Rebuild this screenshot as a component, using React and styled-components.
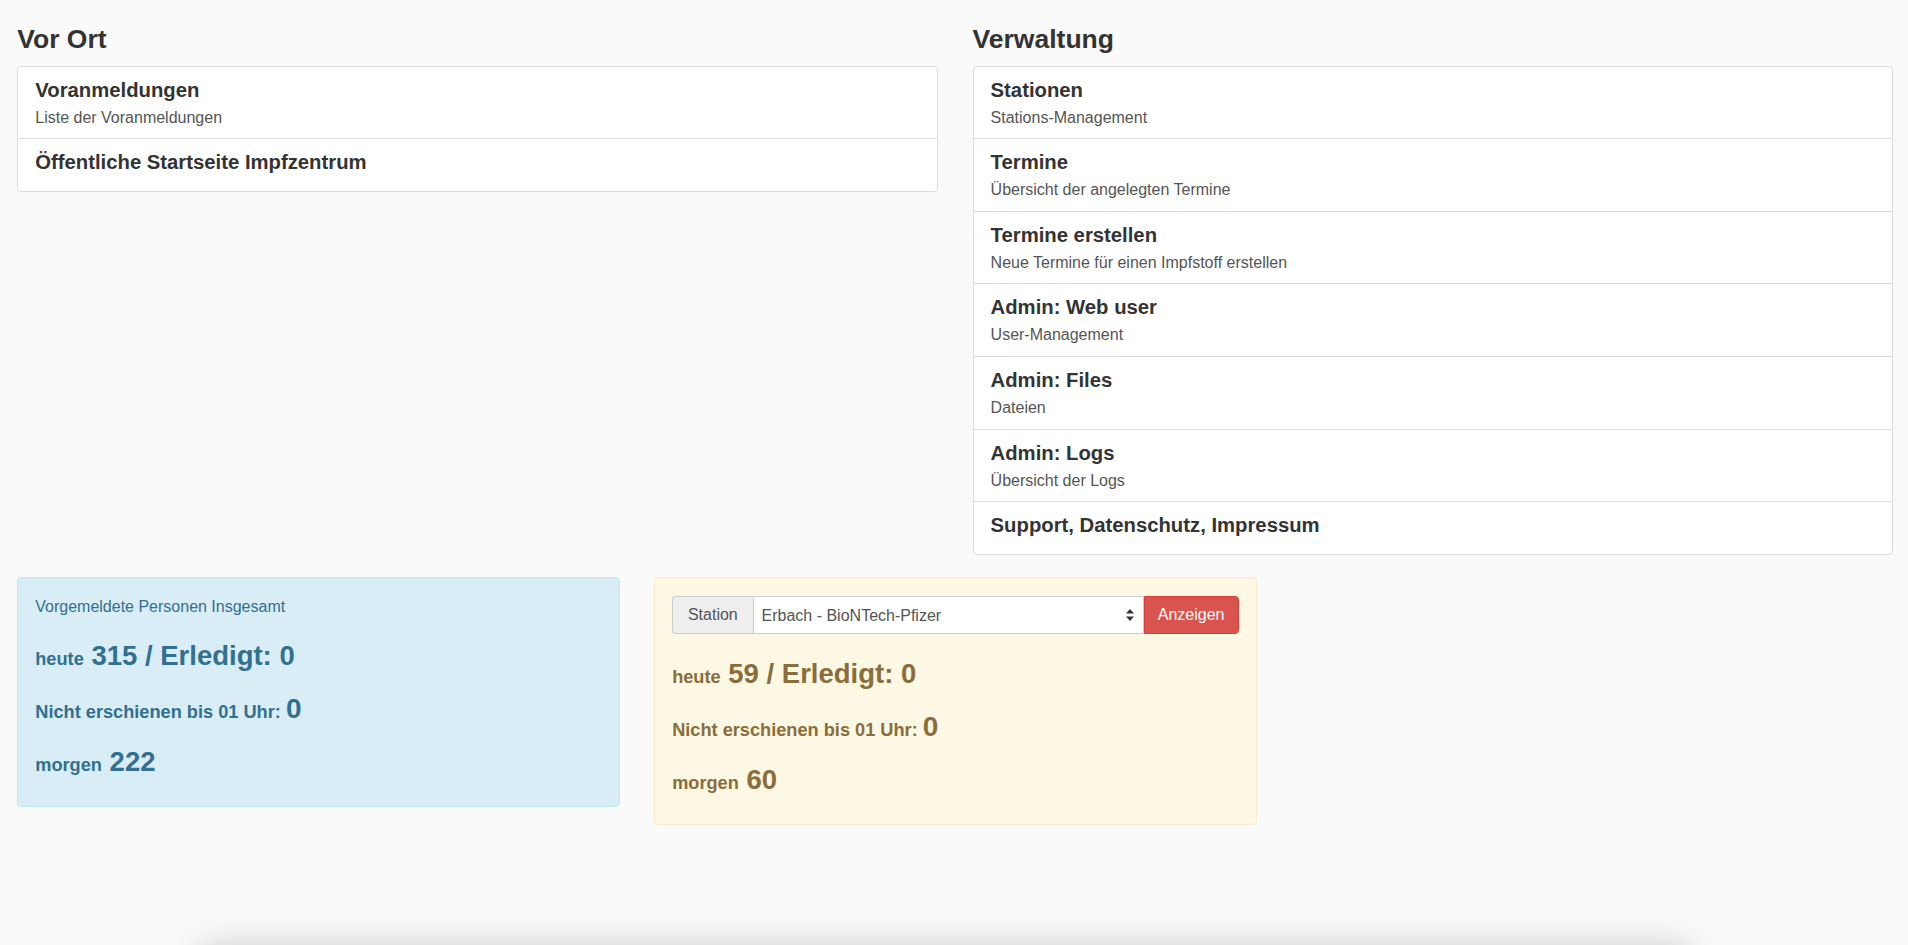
import styled, { createGlobalStyle } from 'styled-components';

const GlobalStyle = createGlobalStyle`
    html, body {
        margin: 0;
        background: #fafafa;
        font-family: "Liberation Sans", Arial, Helvetica, sans-serif;
        color: #333;
        overflow: hidden;
    }
`

const vorOrt = [
    { id: 1, title: 'Voranmeldungen', text: 'Liste der Voranmeldungen' },
    { id: 2, title: 'Öffentliche Startseite Impfzentrum' },
]

const verwaltung = [
    { id: 1, title: 'Stationen', text: 'Stations-Management' },
    { id: 2, title: 'Termine', text: 'Übersicht der angelegten Termine' },
    { id: 3, title: 'Termine erstellen', text: 'Neue Termine für einen Impfstoff erstellen' },
    { id: 4, title: 'Admin: Web user', text: 'User-Management' },
    { id: 5, title: 'Admin: Files', text: 'Dateien' },
    { id: 6, title: 'Admin: Logs', text: 'Übersicht der Logs' },
    { id: 7, title: 'Support, Datenschutz, Impressum' },
]

const LinkSection = ({ heading, items }) => {
    return (
        <div>
            <Heading>{heading}</Heading>
            <List>
                {items.map(({ id, title, text }) => {
                    return (
                        <Item key={id} href="#" $single={!text}>
                            <ItemTitle>{title}</ItemTitle>
                            {text && <ItemText>{text}</ItemText>}
                        </Item>
                    )
                })}
            </List>
        </div>
    )
}

const SortIcon = () => (
    <svg width="8" height="12" viewBox="0 0 8 12">
        <path d="M4 0 L8 4.6 H0 Z" fill="#333" />
        <path d="M4 12 L0 7.4 H8 Z" fill="#333" />
    </svg>
)

const App = () => {
    return (
        <>
            <GlobalStyle />
            <Page>
                <TopRow>
                    <LinkSection heading="Vor Ort" items={vorOrt} />
                    <LinkSection heading="Verwaltung" items={verwaltung} />
                </TopRow>
                <BottomRow>
                    <Alert $variant="info">
                        <Caption>Vorgemeldete Personen Insgesamt</Caption>
                        <Stat>heute<Big> 315 / Erledigt: 0</Big></Stat>
                        <Stat>Nicht erschienen bis 01 Uhr: <Zero>0</Zero></Stat>
                        <Stat>morgen<Big> 222</Big></Stat>
                    </Alert>
                    <Alert $variant="warning">
                        <InputGroup>
                            <Addon>Station</Addon>
                            <SelectWrap>
                                <Select defaultValue="erbach">
                                    <option value="erbach">Erbach - BioNTech-Pfizer</option>
                                </Select>
                                <SelectArrow><SortIcon /></SelectArrow>
                            </SelectWrap>
                            <DangerButton type="button">Anzeigen</DangerButton>
                        </InputGroup>
                        <Stat>heute<Big> 59 / Erledigt: 0</Big></Stat>
                        <Stat>Nicht erschienen bis 01 Uhr: <Zero>0</Zero></Stat>
                        <Stat>morgen<Big> 60</Big></Stat>
                    </Alert>
                </BottomRow>
            </Page>
            <FooterBar />
        </>
    )
}

const Page = styled.div`
    padding: 0 14.6px 0 17.25px;
`

const TopRow = styled.div`
    display: grid;
    grid-template-columns: 1fr 1fr;
    column-gap: 34.5px;
    align-items: start;
`

const Heading = styled.h3`
    margin: 24.6px 0 12px;
    font-size: 26.5px;
    line-height: 29px;
    font-weight: 700;
    color: #333;
`

const List = styled.div`
    background: #fff;
    border: 1px solid #ddd;
    border-radius: 4px;
    margin-bottom: 22px;
`

const Item = styled.a`
    display: block;
    padding: 12px 17px ${({ $single }) => ($single ? '12px' : '10.6px')};
    border-top: 1px solid #ddd;
    color: #333;
    text-decoration: none;
    &:first-child {
        border-top: none;
    }
`

const ItemTitle = styled.h4`
    margin: 0 0 5px;
    font-size: 20.3px;
    line-height: 23px;
    font-weight: 700;
`

const ItemText = styled.p`
    margin: 0;
    font-size: 16px;
    line-height: 21px;
    color: #555;
`

const BottomRow = styled.div`
    display: grid;
    grid-template-columns: repeat(3, 1fr);
    column-gap: 34.5px;
    align-items: start;
`

const alertColors = {
    info: { bg: '#d9edf7', border: '#bce8f1', text: '#31708f' },
    warning: { bg: '#fcf8e3', border: '#faebcc', text: '#8a6d3b' },
}

const Alert = styled.div`
    display: flex;
    flex-direction: column;
    padding: 17px;
    border: 1px solid ${({ $variant }) => alertColors[$variant].border};
    border-radius: 4px;
    background: ${({ $variant }) => alertColors[$variant].bg};
    color: ${({ $variant }) => alertColors[$variant].text};
`

const Caption = styled.div`
    font-size: 16px;
    line-height: 23px;
    margin-bottom: 3.5px;
`

const Stat = styled.div`
    margin-top: 19.8px;
    font-size: 18.2px;
    line-height: 30px;
    font-weight: 700;
    &:last-child {
        margin-bottom: 9px;
    }
`

const Big = styled.span`
    font-size: 27.5px;
    line-height: 30px;
`

const Zero = styled.span`
    font-size: 28px;
    line-height: 30px;
`

const InputGroup = styled.div`
    display: flex;
    height: 38px;
    margin-top: 1px;
    margin-bottom: 5.5px;
    font-size: 16px;
`

const Addon = styled.div`
    display: flex;
    align-items: center;
    padding: 0 14.8px;
    background: #eee;
    border: 1px solid #ccc;
    border-right: none;
    border-radius: 4px 0 0 4px;
    color: #555;
`

const SelectWrap = styled.div`
    position: relative;
    flex: 1;
    display: flex;
`

const Select = styled.select`
    appearance: none;
    -webkit-appearance: none;
    width: 100%;
    height: 38px;
    margin: 0;
    padding: 0 28px 0 8px;
    border: 1px solid #ccc;
    border-radius: 0;
    background: #fff;
    color: #555;
    font-family: inherit;
    font-size: 16px;
    outline: none;
`

const SelectArrow = styled.span`
    position: absolute;
    right: 10px;
    top: 50%;
    transform: translateY(-50%);
    display: flex;
    pointer-events: none;
`

const DangerButton = styled.button`
    padding: 0 13px;
    background: #d9534f;
    border: 1px solid #d43f3a;
    border-radius: 0 4px 4px 0;
    color: #fff;
    font-family: inherit;
    font-size: 16px;
    cursor: pointer;
`

const FooterBar = styled.div`
    position: fixed;
    left: 200px;
    bottom: -60px;
    width: 1490px;
    height: 58px;
    background: #fff;
    box-shadow: 0 0 35px rgba(0, 0, 0, 0.2);
`

export default App
